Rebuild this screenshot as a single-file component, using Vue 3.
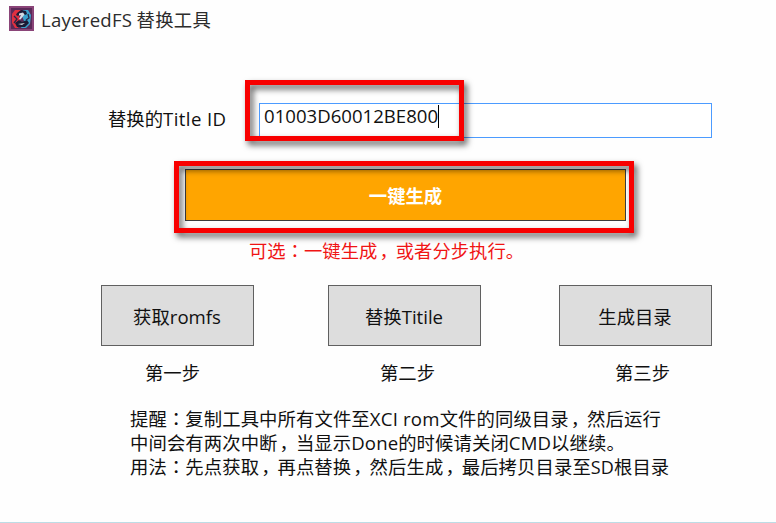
<script setup>
const actions = [
  { cjk: '获取', latin: 'romfs' },
  { cjk: '替换', latin: 'Titile' },
  { cjk: '生成目录', latin: '' },
]
const labels = ['第一步', '第二步', '第三步']
</script>

<template>
  <main class="window">
    <header class="titlebar">
      <svg class="app-icon" width="25" height="25" viewBox="0 0 25 25">
        <rect width="25" height="25" fill="#8a4478" />
        <rect x="2" y="2" width="21" height="21" fill="#5b2a58" />
        <path d="M6 4h6l-2 6 1 4-2 8H6l-3-5V8z" fill="#e03040" />
        <path d="M14 4h5l3 5-1 9-4 4h-5l3-7-2-5z" fill="#3aa0cc" />
        <path d="M8 7l4-3 5 1 1 3-2 1-4-2-3 3-2-1zM6 17l4-3 3 2 5-2 2 3-4 4-8 0z" fill="#1b1a35" />
        <path d="M10 7.500l4-1 1.500 2-4 5-1.500-.5 2-4-2 .5zM9 18l4 1 3-2" fill="#d3dae2" />
        <path d="M5 10l3 3-3 4M19 8l1 4-3 2" fill="none" stroke="#25284a" stroke-width="1.300" />
      </svg>
      <h1><span class="lt">LayeredFS</span> 替换工具</h1>
    </header>

    <section class="field">
      <label>替换的<span class="lt">Title ID</span></label>
      <div class="input"><span class="value">01003D60012BE800</span><i class="caret"></i></div>
    </section>

    <button class="generate">一键生成</button>
    <p class="hint">可选<span class="colon">：</span>一键生成<span class="comma">，</span>或者分步执行。</p>

    <section class="actions">
      <button v-for="action in actions" :key="action.cjk" class="action">{{ action.cjk }}<span v-if="action.latin" class="lt">{{ action.latin }}</span></button>
    </section>
    <section class="labels">
      <span v-for="label in labels" :key="label">{{ label }}</span>
    </section>

    <section class="notes">
      <p class="first">提醒<span class="colon">：</span>复制工具中所有文件至<span class="lt">XCI rom</span>文件的同级目录<span class="comma">，</span>然后运行</p>
      <p>中间会有两次中断<span class="comma">，</span>当显示<span class="lt">Done</span>的时候请关闭<span class="lt">CMD</span>以继续。</p>
      <p>用法<span class="colon">：</span>先点获取<span class="comma">，</span>再点替换<span class="comma">，</span>然后生成<span class="comma">，</span>最后拷贝目录至<span class="lt sd">SD</span>根目录</p>
    </section>

    <div class="mark mark-input"></div>
    <div class="mark mark-generate"></div>
  </main>
</template>

<style>
body {
  margin: 0;
  background: #fefefe;
}
</style>

<style scoped>
.window {
  position: relative;
  box-sizing: border-box;
  width: 776px;
  height: 523px;
  overflow: hidden;
  border-bottom: 1px solid #bddce5;
  background: #fefefe;
  color: #101010;
  font-family: "Noto Sans CJK SC", sans-serif;
  font-size: 18.35px;
  line-height: 24px;
  white-space: nowrap;
}
h1, p {
  margin: 0;
  font-size: inherit;
  font-weight: 400;
}
.lt {
  font-family: "Open Sans", "Noto Sans", sans-serif;
  font-size: 18.6px;
  line-height: 1;
}
.titlebar {
  display: flex;
  height: 40px;
  padding: 6px 0 0 9px;
  box-sizing: border-box;
}
.titlebar h1 {
  margin: 1px 0 0 7px;
  color: #2c2c2c;
  letter-spacing: 0.25px;
}
.app-icon {
  display: block;
}
.field {
  display: flex;
  padding: 63px 0 0 108px;
}
.field label {
  width: 151px;
  padding-top: 3px;
}
.field .lt {
  letter-spacing: 0.4px;
}
.input {
  display: flex;
  box-sizing: border-box;
  width: 453px;
  height: 35px;
  padding-left: 4px;
  border: 1px solid #4c9bff;
  background: #fff;
}
.value {
  font-family: "Open Sans", "Noto Sans", sans-serif;
  font-size: 18.6px;
}
.caret {
  width: 1px;
  height: 23px;
  margin-top: 1px;
  background: #000;
}
button {
  display: block;
  box-sizing: border-box;
  padding: 0;
  border: 1px solid #606060;
  border-radius: 0;
  background: #ddd;
  color: #101010;
  font: inherit;
}
.generate {
  width: 441px;
  height: 52px;
  margin: 31px 0 0 185px;
  padding-bottom: 1px;
  border-color: #3c3c3c;
  background: #ffa500;
  color: #fff;
  font-weight: 700;
}
.hint {
  margin: 17px 0 0 249px;
  color: #f01414;
}
.actions {
  display: grid;
  grid-template-columns: 227px 231px 153px;
  margin: 23px 0 0 101px;
}
.action {
  width: 153px;
  height: 61px;
  padding-right: 1px;
}
.labels {
  display: flex;
  justify-content: space-between;
  width: 525px;
  margin: 14px 0 0 145px;
}
.notes {
  margin: 22px 0 0 130px;
  letter-spacing: 0.1px;
}
.notes .first .lt {
  letter-spacing: 0.2px;
}
.sd {
  font-size: 18px;
}
.colon {
  font-family: "Noto Sans CJK TC", sans-serif;
}
.comma {
  padding-left: 2px;
  letter-spacing: -2px;
}
.mark {
  position: absolute;
  box-sizing: border-box;
  border: 5px solid #f80000;
  filter: drop-shadow(3px 4px 3px rgba(0, 0, 0, 0.65));
}
.mark-input {
  left: 245px;
  top: 80px;
  width: 219px;
  height: 61px;
}
.mark-generate {
  left: 174px;
  top: 161px;
  width: 460px;
  height: 72px;
}
</style>
